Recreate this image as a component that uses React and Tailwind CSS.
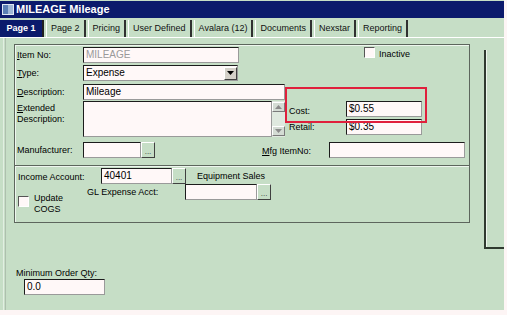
const Field = ({ className = '', color = 'text-black', children }) => (
    <div className={`h-[16px] bg-[#fff8f8] border border-[#1c1c1c] border-r-[#9a9a9a] border-b-[#9a9a9a] px-[2px] text-[10px] leading-[14px] truncate ${color} ${className}`}>
        {children}
    </div>
);

const Dots = () => (
    <div className="w-[14px] h-[16px] bg-[#c6dec6] border border-white border-r-[#404040] border-b-[#404040] flex items-end justify-center text-[8px] leading-[10px] text-[#333]">
        ...
    </div>
);

const Check = ({ className = '' }) => (
    <div className={`w-[11px] h-[11px] bg-[#fff8f8] border border-[#555] border-r-white border-b-white ${className}`} />
);

const Label = ({ className = '', children }) => (
    <div className={`text-[9px] leading-[11px] text-black ${className}`}>{children}</div>
);

const tabs = ['Page 2', 'Pricing', 'User Defined', 'Avalara (12)', 'Documents', 'Nexstar', 'Reporting'];

export default function App() {
    return (
        <div className="w-[507px] h-[315px] bg-[#fdf5f5] overflow-hidden" style={{ fontFamily: '"Liberation Sans", Arial, sans-serif' }}>
            <div className="w-[504px] h-[310px] bg-[#c6dec6] flex flex-col">
                {/* title bar */}
                <div className="h-[17px] mt-[1px] bg-[#0b1a6c] flex items-center pl-[2px]">
                    <div className="w-[12px] h-[11px] bg-[#9fb7d6] border border-[#dfe8f3] flex">
                        <div className="w-[5px] h-full bg-[#5a7fb5]" />
                    </div>
                    <div className="ml-[2px] text-white font-bold text-[11px] leading-none">MILEAGE Mileage</div>
                </div>

                {/* tabs */}
                <div className="h-[20px] flex items-stretch pt-[2px] border-b border-white">
                    <div className="w-[44px] bg-[#0b1a6c] text-white text-[9px] font-semibold flex items-center justify-center border-r-2 border-[#202020]">Page 1</div>
                    {tabs.map((t) => (
                        <div key={t} className="ml-[2px] px-[4px] text-[9px] text-[#111] flex items-center border-l border-white border-r-2 border-r-[#303030]">
                            {t}
                        </div>
                    ))}
                </div>

                {/* body */}
                <div className="flex-1 flex">
                    <div className="w-[14px] flex pl-[3px]">
                        <div className="w-[1px] bg-[#e2eee2]" />
                        <div className="w-[1px] bg-[#aebfae] ml-[1px]" />
                    </div>

                    <div className="w-[456px] flex flex-col">
                        {/* box 1 */}
                        <div className="relative mt-[6px] h-[122px] border border-[#5d665d] shadow-[inset_1px_1px_0_#eef6ee] flex flex-col pl-[2px] pt-[2px]">
                            <div className="flex items-start">
                                <Label className="w-[66px] mt-[3px]"><u>I</u>tem No:</Label>
                                <Field className="w-[156px]" color="text-[#9a9a9a]">MILEAGE</Field>
                                <Check className="ml-[125px]" />
                                <Label className="ml-[4px] mt-[2px]">Inactive</Label>
                            </div>
                            <div className="flex items-start mt-[2px]">
                                <Label className="w-[66px] mt-[3px]"><u>T</u>ype:</Label>
                                <div className="w-[155px] h-[16px] bg-[#fff8f8] border border-[#1c1c1c] border-r-[#9a9a9a] border-b-[#9a9a9a] flex items-center justify-between pl-[2px]">
                                    <span className="text-[10px] leading-none">Expense</span>
                                    <div className="w-[13px] h-[13px] bg-[#d4d0c8] border border-white border-r-[#404040] border-b-[#404040] flex items-center justify-center">
                                        <svg width="7" height="4" viewBox="0 0 7 4"><path d="M0 0h7L3.5 4z" fill="#000" /></svg>
                                    </div>
                                </div>
                            </div>
                            <div className="flex items-start mt-[3px]">
                                <Label className="w-[66px] mt-[3px]"><u>D</u>escription:</Label>
                                <Field className="w-[202px]">Mileage</Field>
                            </div>
                            <div className="flex items-start mt-[1px]">
                                <Label className="w-[66px] mt-[2px]"><u>E</u>xtended<br />Description:</Label>
                                <div className="w-[189px] h-[36px] bg-[#fff8f8] border border-[#1c1c1c] border-r-[#9a9a9a] border-b-[#9a9a9a]" />
                                <div className="w-[13px] h-[36px] flex flex-col justify-between bg-[#dfe9df] py-[1px]">
                                    <div className="h-[10px] bg-[#d4dcd4] border border-white border-r-[#7a7a7a] border-b-[#7a7a7a] flex items-center justify-center">
                                        <svg width="7" height="4" viewBox="0 0 7 4"><path d="M0 4h7L3.5 0z" fill="#8a8a8a" /></svg>
                                    </div>
                                    <div className="h-[10px] bg-[#d4dcd4] border border-white border-r-[#7a7a7a] border-b-[#7a7a7a] flex items-center justify-center">
                                        <svg width="7" height="4" viewBox="0 0 7 4"><path d="M0 0h7L3.5 4z" fill="#8a8a8a" /></svg>
                                    </div>
                                </div>
                                <div className="flex flex-col ml-[4px] gap-[2px]">
                                    <div className="flex items-start">
                                        <Label className="w-[57px] mt-[5px]">Cost:</Label>
                                        <Field className="w-[76px]">$0.55</Field>
                                    </div>
                                    <div className="flex items-start">
                                        <Label className="w-[57px] mt-[3px]">Retail:</Label>
                                        <Field className="w-[76px]">$0.35</Field>
                                    </div>
                                </div>
                            </div>
                            <div className="flex items-start mt-[5px]">
                                <Label className="w-[66px] mt-[3px]">Manufacturer:</Label>
                                <Field className="w-[58px]" />
                                <Dots />
                                <Label className="ml-[107px] w-[67px] mt-[4px]"><u>M</u>fg ItemNo:</Label>
                                <Field className="w-[136px]" />
                            </div>
                            {/* annotation */}
                            <div className="absolute left-[270px] top-[42px] w-[142px] h-[36px] border-2 border-[#e0203c]" />
                        </div>

                        {/* box 2 */}
                        <div className="h-[57px] border border-[#5d665d] border-t-0 shadow-[inset_1px_1px_0_#eef6ee] flex flex-col pl-[3px] pt-[2px]">
                            <div className="flex items-start">
                                <Label className="w-[83px] mt-[4px]">Income Account:</Label>
                                <Field className="w-[71px]">40401</Field>
                                <Dots />
                                <Label className="ml-[11px] mt-[3px]">Equipment Sales</Label>
                            </div>
                            <div className="flex items-start">
                                <div className="flex items-start mt-[9px]">
                                    <Check className="mt-[3px]" />
                                    <Label className="ml-[5px]">Update<br />COGS</Label>
                                </div>
                                <Label className="ml-[24px] mt-[3px] w-[98px]">GL Expense Acct:</Label>
                                <Field className="w-[72px]" />
                                <Dots />
                            </div>
                        </div>

                        {/* minimum order */}
                        <div className="mt-[45px] ml-[2px]">
                            <Label>Minimum Order Qty:</Label>
                            <Field className="w-[81px] ml-[8px]">0.0</Field>
                        </div>
                    </div>

                    {/* right panel */}
                    <div className="ml-[14px] mt-[12px] w-[20px] h-[199px] border-l-2 border-b-2 border-[#2f3a2f] shadow-[inset_1px_0_0_#eef6ee]" />
                </div>
            </div>
        </div>
    );
}
